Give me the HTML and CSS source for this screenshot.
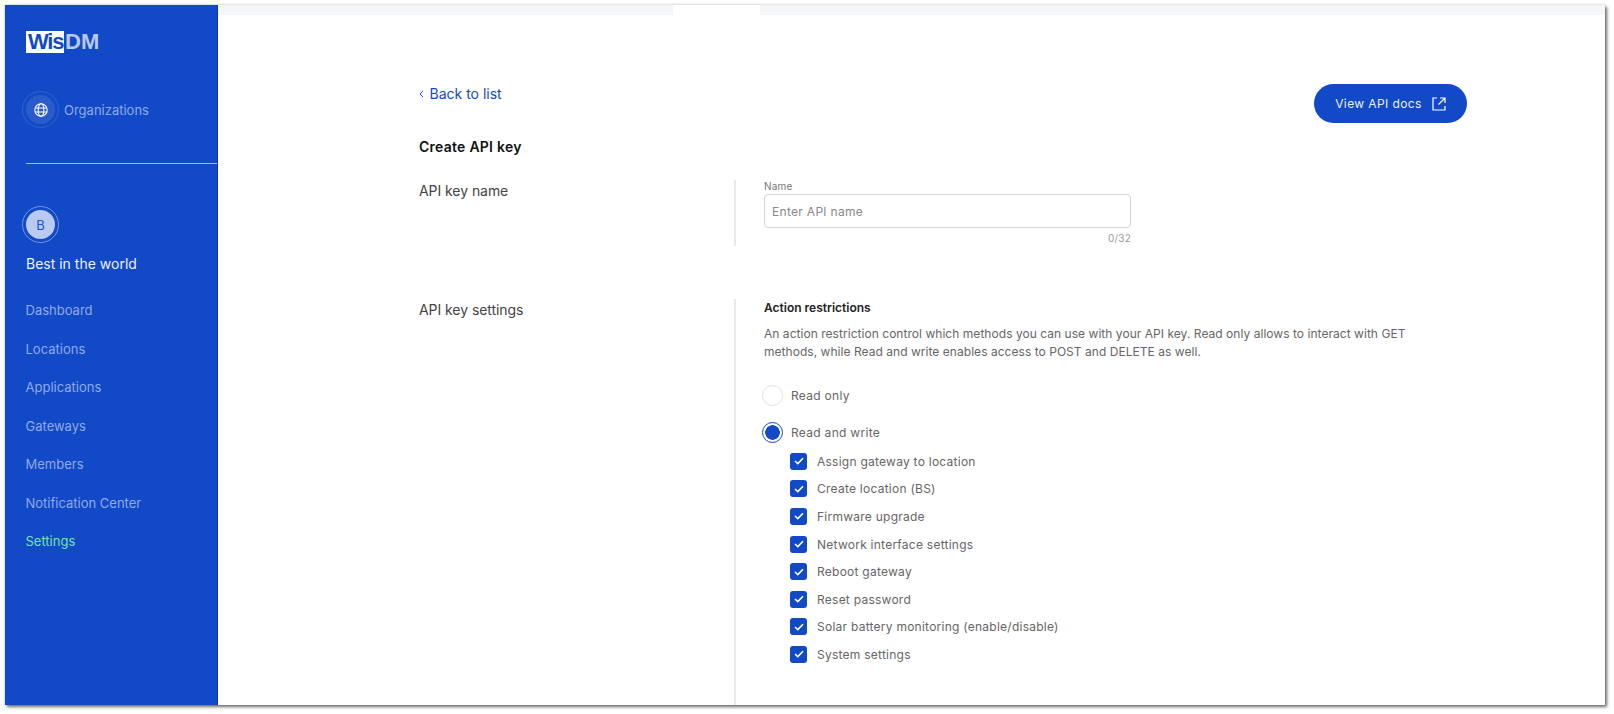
FILE: index.html
```html
<!DOCTYPE html>
<html lang="en">
<head>
<meta charset="utf-8">
<title>Create API key</title>
<link rel="stylesheet" href="styles.css">
</head>
<body>
<div class="frame">
  <aside class="sidebar">
    <div class="logo"><span class="logo-wis">Wis</span><span class="logo-dm">DM</span></div>
    <div class="org">
      <span class="ring"><span class="ring-inner globe">
        <svg width="14" height="14" viewBox="0 0 14 14" fill="none" stroke="#fff" stroke-width="1.1"><circle cx="7" cy="7" r="6.2"/><ellipse cx="7" cy="7" rx="2.8" ry="6.2"/><path d="M1 5h12M1 9h12"/></svg>
      </span></span>
      <span class="org-label">Organizations</span>
    </div>
    <div class="divider"></div>
    <span class="ring avatar-ring"><span class="ring-inner avatar">B</span></span>
    <div class="org-name">Best in the world</div>
    <nav class="nav">
      <a class="nav-item">Dashboard</a>
      <a class="nav-item">Locations</a>
      <a class="nav-item">Applications</a>
      <a class="nav-item">Gateways</a>
      <a class="nav-item">Members</a>
      <a class="nav-item">Notification Center</a>
      <a class="nav-item active">Settings</a>
    </nav>
  </aside>
  <main class="main">
    <div class="tabs"><span class="tab-grey tab-left"></span><span class="tab-open"></span><span class="tab-grey tab-right"></span></div>
    <div class="content">
      <div class="top">
        <a class="back"><svg width="5" height="8" viewBox="0 0 5 8" fill="none" stroke="#1249c6" stroke-width="1"><path d="M4 1 1 4l3 3"/></svg>Back to list</a>
        <a class="docs">View API docs
          <svg width="14" height="14" viewBox="0 0 14 14" fill="none" stroke="#fff" stroke-width="1.2"><path d="M5 1H1v12h12V9M8 1h5v5M13 1 6.5 7.5"/></svg>
        </a>
      </div>
      <h1 class="title">Create API key</h1>
      <section class="row row-name">
        <div class="row-label">API key name</div>
        <div class="row-body">
          <label class="field-label">Name</label>
          <div class="input">Enter API name</div>
          <div class="counter">0/32</div>
        </div>
      </section>
      <section class="row row-settings">
        <div class="row-label">API key settings</div>
        <div class="row-body">
          <h2 class="sub">Action restrictions</h2>
          <p class="desc">An action restriction control which methods you can use with your API key. Read only allows to interact with GET methods, while Read and write enables access to POST and DELETE as well.</p>
          <div class="radio-row first"><span class="radio"></span>Read only</div>
          <div class="radio-row"><span class="radio on"></span>Read and write</div>
          <ul class="checks">
            <li class="check"><span class="box"><svg width="10" height="8" viewBox="0 0 10 8" fill="none" stroke="#fff" stroke-width="1.6"><path d="m1 4 2.8 2.6L9 1.2"/></svg></span>Assign gateway to location</li>
            <li class="check"><span class="box"><svg width="10" height="8" viewBox="0 0 10 8" fill="none" stroke="#fff" stroke-width="1.6"><path d="m1 4 2.8 2.6L9 1.2"/></svg></span>Create location (BS)</li>
            <li class="check"><span class="box"><svg width="10" height="8" viewBox="0 0 10 8" fill="none" stroke="#fff" stroke-width="1.6"><path d="m1 4 2.8 2.6L9 1.2"/></svg></span>Firmware upgrade</li>
            <li class="check"><span class="box"><svg width="10" height="8" viewBox="0 0 10 8" fill="none" stroke="#fff" stroke-width="1.6"><path d="m1 4 2.8 2.6L9 1.2"/></svg></span>Network interface settings</li>
            <li class="check"><span class="box"><svg width="10" height="8" viewBox="0 0 10 8" fill="none" stroke="#fff" stroke-width="1.6"><path d="m1 4 2.8 2.6L9 1.2"/></svg></span>Reboot gateway</li>
            <li class="check"><span class="box"><svg width="10" height="8" viewBox="0 0 10 8" fill="none" stroke="#fff" stroke-width="1.6"><path d="m1 4 2.8 2.6L9 1.2"/></svg></span>Reset password</li>
            <li class="check"><span class="box"><svg width="10" height="8" viewBox="0 0 10 8" fill="none" stroke="#fff" stroke-width="1.6"><path d="m1 4 2.8 2.6L9 1.2"/></svg></span>Solar battery monitoring (enable/disable)</li>
            <li class="check"><span class="box"><svg width="10" height="8" viewBox="0 0 10 8" fill="none" stroke="#fff" stroke-width="1.6"><path d="m1 4 2.8 2.6L9 1.2"/></svg></span>System settings</li>
          </ul>
        </div>
      </section>
    </div>
  </main>
</div>
</body>
</html>
```
FILE: styles.css
```css
* { box-sizing: border-box; }
html, body { margin: 0; height: 100%; background: #fff; overflow: hidden; }
body { padding: 5px 9px 9px 5px; font-family: Inter, "Liberation Sans", sans-serif; color: #333; }
.frame {
  display: flex; height: 700px; width: 1600px; overflow: hidden; background: #fff;
  box-shadow: 2px 2px 3px rgba(0,0,0,.55), 0 0 3px rgba(0,0,0,.2);
}
.sidebar {
  flex: 0 0 212.5px; background: #1249c6; border-right: 1px solid #0a30c8;
  padding: 26px 0 0 21px; display: flex; flex-direction: column; align-items: flex-start;
}
.logo { display: flex; font: bold 22px/22px "Liberation Sans", sans-serif; height: 22px; }
.logo-wis { background: #fff; color: #1249c6; padding-left: 2px; width: 38px; letter-spacing: -1.2px; white-space: nowrap; }
.logo-dm { color: #b7c9ee; padding-left: 1px; letter-spacing: .2px; }
.org { display: flex; align-items: center; gap: 5px; margin: 38px 0 0 -4px; }
.ring { width: 37px; height: 37px; border-radius: 50%; border: 1px solid rgba(255,255,255,.13); display: flex; align-items: center; justify-content: center; flex: none; }
.ring-inner { width: 29px; height: 29px; border-radius: 50%; display: flex; align-items: center; justify-content: center; }
.globe { background: rgba(255,255,255,.1); }
.org-label { color: #8fa9e6; font-size: 13px; }
.divider { width: 191px; height: 1px; background: #a3b9ec; margin-top: 35px; }
.avatar-ring { margin: 42px 0 0 -4px; border: 1px solid rgba(255,255,255,.4); }
.avatar { background: #b9c9ef; color: #1f55cc; font-size: 13px; }
.org-name { color: #ecf1fc; font-size: 14px; line-height: 18px; margin-top: 12px; }
.nav { display: flex; flex-direction: column; margin: 18px 0 0 -.5px; }
.nav-item { color: #8fa9e6; font-size: 13px; height: 38.5px; line-height: 38.5px; }
.nav-item.active { color: #74e2a8; }
.main { flex: 1; min-width: 0; display: flex; flex-direction: column; }
.tabs { display: flex; height: 10px; flex: none; }
.tab-grey { background: #f5f6f8; }
.tab-left { width: 454.5px; }
.tab-open { width: 87px; background: #fff; }
.tab-right { flex: 1; }
.content { padding: 0 138px 0 201px; flex: 1; display: flex; flex-direction: column; }
.top { display: flex; justify-content: space-between; align-items: flex-start; padding-top: 69px; height: 122px; }
.back { display: flex; align-items: center; gap: 5.5px; color: #1249c6; font-size: 14px; line-height: 20px; }
.docs { display: flex; align-items: center; justify-content: center; gap: 10px; width: 153px; height: 39px; border-radius: 20px; background: #1249c6; color: #e8eefb; font-size: 12px; font-weight: 400; letter-spacing: .4px; }
.title { margin: 0; font-size: 14px; font-weight: 600; line-height: 20px; color: #111; letter-spacing: .25px; }
.row { display: grid; grid-template-columns: 315px 1fr; }
.row-name { margin-top: 23px; height: 66px; }
.row-settings { margin-top: 53px; flex: 1; }
.row-label { font-size: 14px; line-height: 20px; letter-spacing: -.06px; color: #444; margin-top: 1px; }
.row-body { border-left: 2px solid #e9e9e9; padding-left: 28px; }
.field-label { display: block; font-size: 10px; line-height: 14px; color: #777; letter-spacing: .2px; margin-top: -1px; }
.input { width: 367px; height: 34px; border: 1px solid #d4d4d4; border-radius: 4px; padding: 0 7px; font-size: 12px; line-height: 33px; color: #888; letter-spacing: .3px; margin-top: 1px; }
.counter { width: 367px; text-align: right; font-size: 10px; line-height: 14px; margin-top: 3px; color: #999; letter-spacing: .2px; }
.sub { margin: 1px 0 0; font-size: 12px; font-weight: 600; line-height: 16px; color: #222; }
.desc { margin: 9px 0 0; width: 660px; font-size: 12px; line-height: 17.5px; color: #666; letter-spacing: .04px; }
.radio-row { display: flex; align-items: center; gap: 8px; height: 21px; margin-top: 16px; font-size: 12px; letter-spacing: .3px; color: #666; margin-left: -2px; }
.radio-row.first { margin-top: 25px; }
.radio { width: 21px; height: 21px; border-radius: 50%; border: 1px solid #e2e2e2; flex: none; }
.radio.on { border-color: #1249c6; background: radial-gradient(circle, #1249c6 0 7px, #fff 7.5px); }
.checks { list-style: none; margin: 4.5px 0 0; padding: 0 0 0 26px; }
.check { display: flex; align-items: center; gap: 10px; height: 27.6px; font-size: 12px; letter-spacing: .25px; color: #666; }
.box { width: 17px; height: 17px; border-radius: 3px; background: #1249c6; display: flex; align-items: center; justify-content: center; flex: none; }
```
